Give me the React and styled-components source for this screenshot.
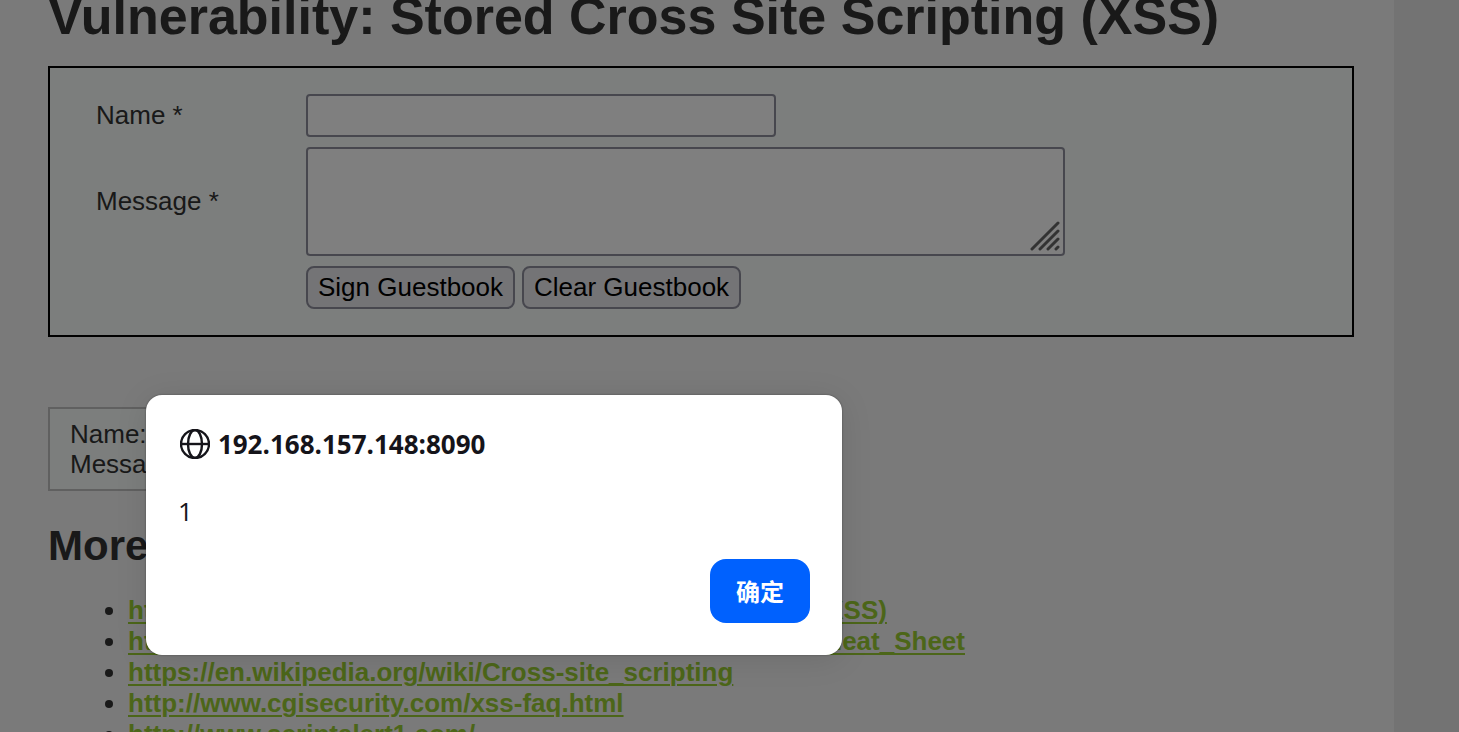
// NPM ////////////////////////////////////////////////////////////////////////////////////////////////////
import { useState } from "react";
import styled, { createGlobalStyle } from "styled-components";

// VARS ////////////////////////////////////////////////////////////////////////////////////////////////////
const links = [
  "https://www.owasp.org/index.php/Cross-site_Scripting_(XSS)",
  "https://www.owasp.org/index.php/XSS_Filter_Evasion_Cheat_Sheet",
  "https://en.wikipedia.org/wiki/Cross-site_scripting",
  "http://www.cgisecurity.com/xss-faq.html",
  "http://www.scriptalert1.com/",
];

const App = () => {
  const [name, setName] = useState("");
  const [message, setMessage] = useState("");
  const [showAlert, setShowAlert] = useState(true);

  // FUNCS ////////////////////////////////////////////////////////////////////////////////////////////////////
  const clearForm = () => {
    setName("");
    setMessage("");
  };

  return (
    <Page>
      <GlobalStyle />
      <Main>
        <Title>Vulnerability: Stored Cross Site Scripting (XSS)</Title>
        <Form onSubmit={(e) => e.preventDefault()}>
          <Label htmlFor="name">Name *</Label>
          <NameInput
            id="name"
            type="text"
            value={name}
            onChange={(e) => setName(e.target.value)}
          />
          <Label htmlFor="message">Message *</Label>
          <MessagePart>
            <MessageInput
              id="message"
              value={message}
              onChange={(e) => setMessage(e.target.value)}
            />
            <Grip viewBox="0 0 30 30" aria-hidden="true">
              <path d="M2 28L28 2M10 28L28 10M18 28L28 18M26 28L28 26" />
            </Grip>
          </MessagePart>
          <Buttons>
            <FormButton type="submit">Sign Guestbook</FormButton>
            <FormButton type="button" onClick={clearForm}>
              Clear Guestbook
            </FormButton>
          </Buttons>
        </Form>
        <Comment>
          Name: test
          <br />
          Message:
        </Comment>
        <SubTitle>More Information</SubTitle>
        <LinkList>
          {links.map((link) => (
            <li key={link}>
              <a href={link}>{link}</a>
            </li>
          ))}
        </LinkList>
      </Main>
      {showAlert && (
        <Overlay>
          <Dialog role="alertdialog" aria-labelledby="origin">
            <Origin id="origin">
              <Globe viewBox="0 0 30 30" aria-hidden="true">
                <circle cx="15" cy="15" r="14" />
                <ellipse cx="15" cy="15" rx="7" ry="14" />
                <path d="M1 15H29" />
              </Globe>
              192.168.157.148:8090
            </Origin>
            <AlertText>1</AlertText>
            <OkButton type="button" onClick={() => setShowAlert(false)}>
              确定
            </OkButton>
          </Dialog>
        </Overlay>
      )}
    </Page>
  );
};

export default App;

// STYLED COMPONENTS ////////////////////////////////////////////////////////////////////////////////////////////////////

const GlobalStyle = createGlobalStyle`
  * {
    box-sizing: border-box;
  }
  body {
    margin: 0;
    background-color: #e7e7e7;
    color: #333;
    font: 26px/30px Arial, "Liberation Sans", sans-serif;
  }
`;

const Page = styled.div`
  position: relative;
  height: 100vh;
  padding-right: 65px;
  overflow: hidden;
`;

const Main = styled.main`
  min-height: 100%;
  padding: 0 40px 0 48px;
  background-color: #f4f4f4;
`;

const Title = styled.h1`
  margin: -14px 0 20px;
  font-size: 52px;
  line-height: 60px;
  white-space: nowrap;
`;

const Form = styled.form`
  display: grid;
  grid-template-columns: 200px 1fr;
  gap: 10px;
  align-items: center;
  padding: 26px 46px;
  border: 2px solid #000;
  background-color: #f8fcfa;
`;

const Label = styled.label`
  justify-self: start;
  padding-bottom: 2px;
`;

const NameInput = styled.input`
  width: 470px;
  height: 43px;
  padding: 2px 4px;
  border: 2px solid #8f8f9d;
  border-radius: 4px;
  background-color: #fff;
  font: inherit;
`;

const MessagePart = styled.div`
  position: relative;
  width: 759px;
  height: 109px;
`;

const MessageInput = styled.textarea`
  display: block;
  width: 100%;
  height: 100%;
  padding: 4px;
  border: 2px solid #8f8f9d;
  border-radius: 4px;
  background-color: #fff;
  font: inherit;
  resize: none;
`;

const Grip = styled.svg`
  position: absolute;
  right: 5px;
  bottom: 5px;
  width: 30px;
  height: 30px;
  fill: none;
  stroke: #666;
  stroke-width: 3;
  stroke-linecap: round;
  pointer-events: none;
`;

const Buttons = styled.div`
  grid-column: 2;
  display: flex;
  gap: 7px;
`;

const FormButton = styled.button`
  height: 43px;
  padding: 0 10px 2px;
  border: 2px solid #8f8f9d;
  border-radius: 8px;
  background-color: #e9e9ed;
  color: #000;
  font: inherit;
`;

const Comment = styled.div`
  width: 700px;
  margin-top: 70px;
  padding: 10px 20px;
  border: 2px solid #c0c0c0;
  background-color: #f8fcfa;
`;

const SubTitle = styled.h2`
  margin: 31px 0 25px;
  font-size: 42px;
  line-height: 48px;
`;

const LinkList = styled.ul`
  margin: 0;
  padding-left: 80px;
  line-height: 31px;
  a {
    color: #99cc33;
    font-weight: bold;
    text-decoration-thickness: 2px;
    text-underline-offset: 3px;
  }
`;

const Overlay = styled.div`
  position: absolute;
  inset: 0;
  background-color: rgba(0, 0, 0, 0.5);
`;

const Dialog = styled.div`
  position: absolute;
  top: 395px;
  left: 10%;
  display: flex;
  flex-direction: column;
  width: 696px;
  padding: 32px;
  border-radius: 16px;
  background-color: #fff;
  box-shadow: 0 4px 32px rgba(0, 0, 0, 0.1), 0 0 2px rgba(0, 0, 0, 0.4);
  color: #15141a;
  font-family: "Segoe UI", "Open Sans", "Noto Sans CJK SC", sans-serif;
`;

const Origin = styled.div`
  display: flex;
  align-items: center;
  gap: 8px;
  height: 34px;
  padding-left: 2px;
  font-weight: 700;
`;

const Globe = styled.svg`
  width: 30px;
  height: 30px;
  fill: none;
  stroke: #15141a;
  stroke-width: 2.4;
`;

const AlertText = styled.p`
  margin: 35px 0 31px;
  height: 32px;
`;

const OkButton = styled.button`
  align-self: flex-end;
  width: 100px;
  height: 64px;
  padding: 0;
  border: 0;
  border-radius: 16px;
  background-color: #0061fe;
  color: #fff;
  font: bold 24px/36px "Noto Sans CJK SC", sans-serif;
`;
